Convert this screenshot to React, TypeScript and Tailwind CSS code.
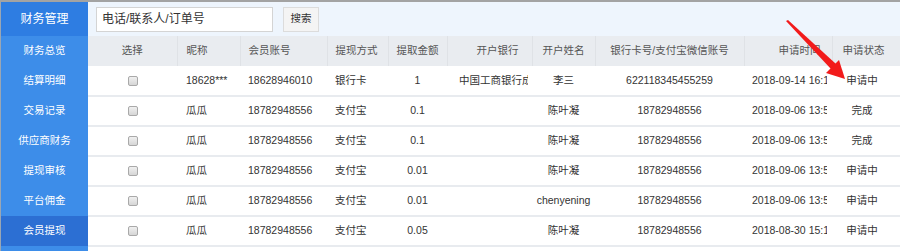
import React from 'react';

const menu = ['财务总览', '结算明细', '交易记录', '供应商财务', '提现审核', '平台佣金', '会员提现'];

const cols = [
  { title: '选择', w: 89, align: 'text-center' },
  { title: '昵称', w: 63, align: 'text-left pl-[9px]' },
  { title: '会员账号', w: 87, align: 'text-left pl-[8px]' },
  { title: '提现方式', w: 61, align: 'text-left pl-[8px]' },
  { title: '提取金额', w: 59, align: 'text-center' },
  { title: '开户银行', w: 85, align: 'text-center pl-[16px]' },
  { title: '开户姓名', w: 63, align: 'text-center' },
  { title: '银行卡号/支付宝微信账号', w: 149, align: 'text-center' },
  { title: '申请时间', w: 88, align: 'text-left pl-[34px]' },
  { title: '申请状态', w: 68, align: 'text-left pl-[10px]' },
];

// data cell alignment, by column after the checkbox
const cellAlign = [
  'text-left pl-[9px] pr-[4px]',
  'text-left pl-[8px] pr-[4px]',
  'text-left pl-[8px] pr-[4px]',
  'text-center',
  'text-left pl-[12px] pr-[4px]',
  'text-center',
  'text-center',
  'text-left pl-[8px] pr-[5px]',
  'text-center pr-[8px]',
];

const rows = [
  ['18628***', '18628946010', '银行卡', '1', '中国工商银行成都分行', '李三', '622118345455259', '2018-09-14 16:12', '申请中'],
  ['瓜瓜', '18782948556', '支付宝', '0.1', '', '陈叶凝', '18782948556', '2018-09-06 13:52', '完成'],
  ['瓜瓜', '18782948556', '支付宝', '0.1', '', '陈叶凝', '18782948556', '2018-09-06 13:51', '完成'],
  ['瓜瓜', '18782948556', '支付宝', '0.01', '', '陈叶凝', '18782948556', '2018-09-06 13:50', '申请中'],
  ['瓜瓜', '18782948556', '支付宝', '0.01', '', 'chenyening', '18782948556', '2018-09-06 13:50', '申请中'],
  ['瓜瓜', '18782948556', '支付宝', '0.05', '', '陈叶凝', '18782948556', '2018-08-30 15:12', '申请中'],
];

const font = { fontFamily: '"Liberation Sans", "Noto Sans CJK SC", sans-serif' };

export default function App() {
  return (
    <div className="w-[900px] h-[251px] overflow-hidden bg-white relative text-[10.5px]" style={font}>
      <div className="h-[2px] bg-[#a3a3a3]" />
      <div className="flex">
        {/* sidebar */}
        <div className="w-[88px] shrink-0 border-l border-[#9aa6b4] bg-[#3d8de9] h-[249px]">
          <div className="h-[34px] bg-[#2e7de2] flex items-center justify-center text-white text-[12px]">财务管理</div>
          {menu.map((m, i) => (
            <div
              key={m}
              className={`h-[30px] flex items-center justify-center text-white ${
                i === 6 ? 'bg-[#2c6fd3]' : ''
              }`}
            >
              {m}
            </div>
          ))}
        </div>

        {/* main */}
        <div className="flex-1 min-w-0">
          <div className="h-[34px] bg-[#eef5fd] flex items-center pl-[8px] gap-[10px]">
            <div className="w-[177px] h-[25px] bg-white border border-[#d4d4d4] flex items-center pl-[5px] text-[#333] text-[12px]">
              电话/联系人/订单号
            </div>
            <button className="w-[36px] h-[25px] bg-[#f4f4f4] border border-[#dcdcdc] text-[#333]">
              搜索
            </button>
          </div>

          <table className="table-fixed border-collapse w-[812px]">
            <colgroup>
              {cols.map((c) => (
                <col key={c.title} style={{ width: c.w }} />
              ))}
            </colgroup>
            <thead>
              <tr className="h-[30px] bg-[#e9ecf0]">
                {cols.map((c, i) => (
                  <th
                    key={c.title}
                    className={`font-normal text-[#555] whitespace-nowrap overflow-hidden ${c.align} ${
                      i < cols.length - 1 ? 'border-r border-[#dfe2e6]' : ''
                    }`}
                  >
                    {c.title}
                  </th>
                ))}
              </tr>
            </thead>
            <tbody>
              {rows.map((r, ri) => (
                <tr key={ri} className="h-[30px] border-b-2 border-[#e8ebef] text-[#333]">
                  <td className="text-center">
                    <span className="inline-block w-[10px] h-[10px] rounded-[2px] border border-[#a9a9a9] bg-gradient-to-b from-[#f0f0f0] to-[#d6d6d6] align-middle" />
                  </td>
                  {r.map((v, ci) => (
                    <td key={ci} className={cellAlign[ci]}>
                      <div className="overflow-hidden whitespace-nowrap">{v}</div>
                    </td>
                  ))}
                </tr>
              ))}
            </tbody>
          </table>
        </div>
      </div>

      {/* red annotation arrow */}
      <svg className="absolute left-0 top-0 pointer-events-none" width="900" height="251">
        <polygon points="786,21 788,20 836,64 831,69" fill="#f21b1b" />
        <polygon points="845,79 839,60 826,73" fill="#f21b1b" />
      </svg>
    </div>
  );
}
